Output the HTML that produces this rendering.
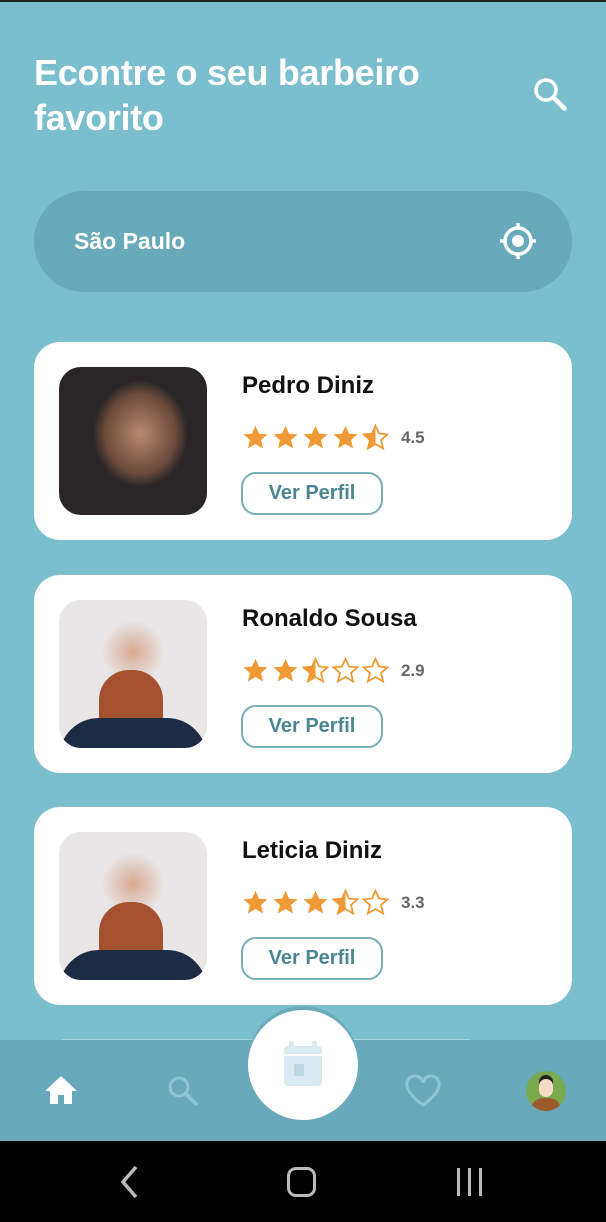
<!DOCTYPE html>
<html><head><meta charset="utf-8"><style>
*{margin:0;padding:0;box-sizing:border-box}
body{width:606px;height:1222px;background:#7bbfcf;font-family:"Liberation Sans",sans-serif;position:relative;overflow:hidden}
.top{position:absolute;top:0;left:0;width:606px;height:2px;background:#222}
h1{position:absolute;left:34px;top:50px;color:#fff;font-size:36px;line-height:45px;font-weight:bold;letter-spacing:-0.3px}
.loc{position:absolute;left:34px;top:191px;width:538px;height:101px;border-radius:50px;background:#68a9ba}
.loc span{position:absolute;left:40px;top:37px;color:#fff;font-size:23px;font-weight:bold}
.card{position:absolute;left:34px;width:538px;height:198px;background:#fff;border-radius:26px}
.ph{position:absolute;left:25px;top:25px;width:148px;height:148px;border-radius:22px;overflow:hidden}
.nm{position:absolute;left:208px;top:30px;font-size:24px;font-weight:bold;color:#111}
.st{position:absolute;left:208px;top:82px;display:flex;align-items:center}
.st svg{width:27px;height:27px;margin-right:3px}
.st b{font-size:17px;color:#666;margin-left:9px}
.btn{position:absolute;left:207px;top:130px;width:142px;height:43px;border:2px solid #78aeb9;border-radius:15px;color:#4a8591;font-size:20px;text-align:center;line-height:39px;font-weight:bold}
.bar{position:absolute;left:0;top:1040px;width:606px;height:101px;background:#68a9bb}
.nav{position:absolute;left:0;top:1141px;width:606px;height:81px;background:#000}
.fab{position:absolute;left:248px;top:1010px;width:110px;height:110px;border-radius:50%;background:#fff;box-shadow:0 -4px 0 #6aabbb}
</style></head><body>
<div class="top"></div>
<h1>Econtre o seu barbeiro<br>favorito</h1>
<svg style="position:absolute;left:532px;top:76px" width="36" height="36" viewBox="0 0 36 36"><circle cx="14" cy="14" r="10" fill="none" stroke="#fff" stroke-width="3.5"/><path d="M21.5 21.5l11 11" stroke="#fff" stroke-width="4.5" stroke-linecap="round"/></svg>
<div class="loc"><span>São Paulo</span>
<svg style="position:absolute;left:464px;top:30px" width="40" height="40" viewBox="0 0 40 40"><circle cx="20" cy="20" r="13" fill="none" stroke="#fff" stroke-width="3.5"/><circle cx="20" cy="20" r="6" fill="#fff"/><path d="M20 2v6M20 32v6M2 20h6M32 20h6" stroke="#fff" stroke-width="3.5"/></svg></div>

<svg width="0" height="0" style="position:absolute"><defs>
<path id="s" d="M12 1.5l3.1 7 7.6.7-5.8 5 1.8 7.5L12 17.8l-6.7 3.9 1.8-7.5-5.8-5 7.6-.7z"/>
<clipPath id="h"><rect x="0" y="0" width="12" height="24"/></clipPath>
</defs></svg>

<div class="card" style="top:342px"><div class="ph" style="background:radial-gradient(ellipse 40% 45% at 55% 45%,#b88a70,#6a4a3a 60%,#2a2628 80%),#2a2628"></div>
<div class="nm">Pedro Diniz</div>
<div class="st">
<svg viewBox="0 0 24 24"><use href="#s" fill="#f09a35"/></svg><svg viewBox="0 0 24 24"><use href="#s" fill="#f09a35"/></svg><svg viewBox="0 0 24 24"><use href="#s" fill="#f09a35"/></svg><svg viewBox="0 0 24 24"><use href="#s" fill="#f09a35"/></svg><svg viewBox="0 0 24 24"><use href="#s" fill="none" stroke="#f09a35" stroke-width="1.6"/><use href="#s" fill="#f09a35" clip-path="url(#h)"/></svg><b>4.5</b></div>
<div class="btn">Ver Perfil</div></div>

<div class="card" style="top:575px"><div class="ph" style="background:radial-gradient(ellipse 30% 30% at 50% 35%,#d9a890,#e8e6e6 70%),linear-gradient(#ecebeb 55%,#e8e8e8 55%)"><div style="position:absolute;left:40px;top:70px;width:64px;height:70px;border-radius:30px 30px 20px 20px;background:#a5502e"></div><div style="position:absolute;left:0;top:118px;width:148px;height:40px;background:#1d2b45;border-radius:40px 40px 0 0"></div></div>
<div class="nm">Ronaldo Sousa</div>
<div class="st">
<svg viewBox="0 0 24 24"><use href="#s" fill="#f09a35"/></svg><svg viewBox="0 0 24 24"><use href="#s" fill="#f09a35"/></svg><svg viewBox="0 0 24 24"><use href="#s" fill="none" stroke="#f09a35" stroke-width="1.6"/><use href="#s" fill="#f09a35" clip-path="url(#h)"/></svg><svg viewBox="0 0 24 24"><use href="#s" fill="none" stroke="#f09a35" stroke-width="1.6"/></svg><svg viewBox="0 0 24 24"><use href="#s" fill="none" stroke="#f09a35" stroke-width="1.6"/></svg><b>2.9</b></div>
<div class="btn">Ver Perfil</div></div>

<div class="card" style="top:807px"><div class="ph" style="background:radial-gradient(ellipse 30% 30% at 50% 35%,#d9a890,#e8e6e6 70%),linear-gradient(#ecebeb 55%,#e8e8e8 55%)"><div style="position:absolute;left:40px;top:70px;width:64px;height:70px;border-radius:30px 30px 20px 20px;background:#a5502e"></div><div style="position:absolute;left:0;top:118px;width:148px;height:40px;background:#1d2b45;border-radius:40px 40px 0 0"></div></div>
<div class="nm">Leticia Diniz</div>
<div class="st">
<svg viewBox="0 0 24 24"><use href="#s" fill="#f09a35"/></svg><svg viewBox="0 0 24 24"><use href="#s" fill="#f09a35"/></svg><svg viewBox="0 0 24 24"><use href="#s" fill="#f09a35"/></svg><svg viewBox="0 0 24 24"><use href="#s" fill="none" stroke="#f09a35" stroke-width="1.6"/><use href="#s" fill="#f09a35" clip-path="url(#h)"/></svg><svg viewBox="0 0 24 24"><use href="#s" fill="none" stroke="#f09a35" stroke-width="1.6"/></svg><b>3.3</b></div>
<div class="btn">Ver Perfil</div></div>

<div class="bar"></div>
<div style="position:absolute;left:62px;top:1039px;width:408px;height:1px;background:#a8d6e0"></div>
<div class="fab"></div>
<svg style="position:absolute;left:280px;top:1040px" width="46" height="48" viewBox="0 0 46 48"><rect x="4" y="6" width="38" height="40" rx="4" fill="#dbeaf0"/><rect x="9" y="1" width="5" height="9" rx="2" fill="#dbeaf0"/><rect x="32" y="1" width="5" height="9" rx="2" fill="#dbeaf0"/><rect x="4" y="14" width="38" height="2" fill="#fff"/><rect x="14" y="24" width="10" height="12" fill="#bcd9e3"/></svg>
<svg style="position:absolute;left:44px;top:1075px" width="34" height="30" viewBox="0 0 34 30"><path d="M17 1L1 16h5v13h8v-9h6v9h8V16h5z" fill="#fff"/></svg>
<svg style="position:absolute;left:166px;top:1074px" width="34" height="34" viewBox="0 0 34 34"><circle cx="13" cy="13" r="9" fill="none" stroke="#8fc5d2" stroke-width="3"/><path d="M20 20l10 10" stroke="#8fc5d2" stroke-width="3.5" stroke-linecap="round"/></svg>
<svg style="position:absolute;left:404px;top:1074px" width="38" height="34" viewBox="0 0 38 34"><path d="M19 31S3 20 3 11a8 8 0 0 1 16-2 8 8 0 0 1 16 2c0 9-16 20-16 20z" fill="none" stroke="#8fc5d2" stroke-width="3"/></svg>
<div style="position:absolute;left:526px;top:1071px;width:40px;height:40px;border-radius:50%;background:#7aaa4e;overflow:hidden"><div style="position:absolute;left:13px;top:8px;width:14px;height:18px;border-radius:7px;background:#f5dcc8;box-shadow:0 -4px 0 #222"></div><div style="position:absolute;left:5px;top:27px;width:30px;height:20px;border-radius:12px 12px 0 0;background:#9a5a2a"></div></div>
<div class="nav"></div>
<svg style="position:absolute;left:118px;top:1164px" width="24" height="36" viewBox="0 0 24 36"><path d="M18 3L5 18l13 15" fill="none" stroke="#bbb" stroke-width="3.5"/></svg>
<div style="position:absolute;left:287px;top:1167px;width:29px;height:30px;border:3.5px solid #bbb;border-radius:9px"></div>
<div style="position:absolute;left:457px;top:1168px;width:3px;height:28px;background:#bbb;box-shadow:11px 0 0 #bbb,22px 0 0 #bbb"></div>
</body></html>
